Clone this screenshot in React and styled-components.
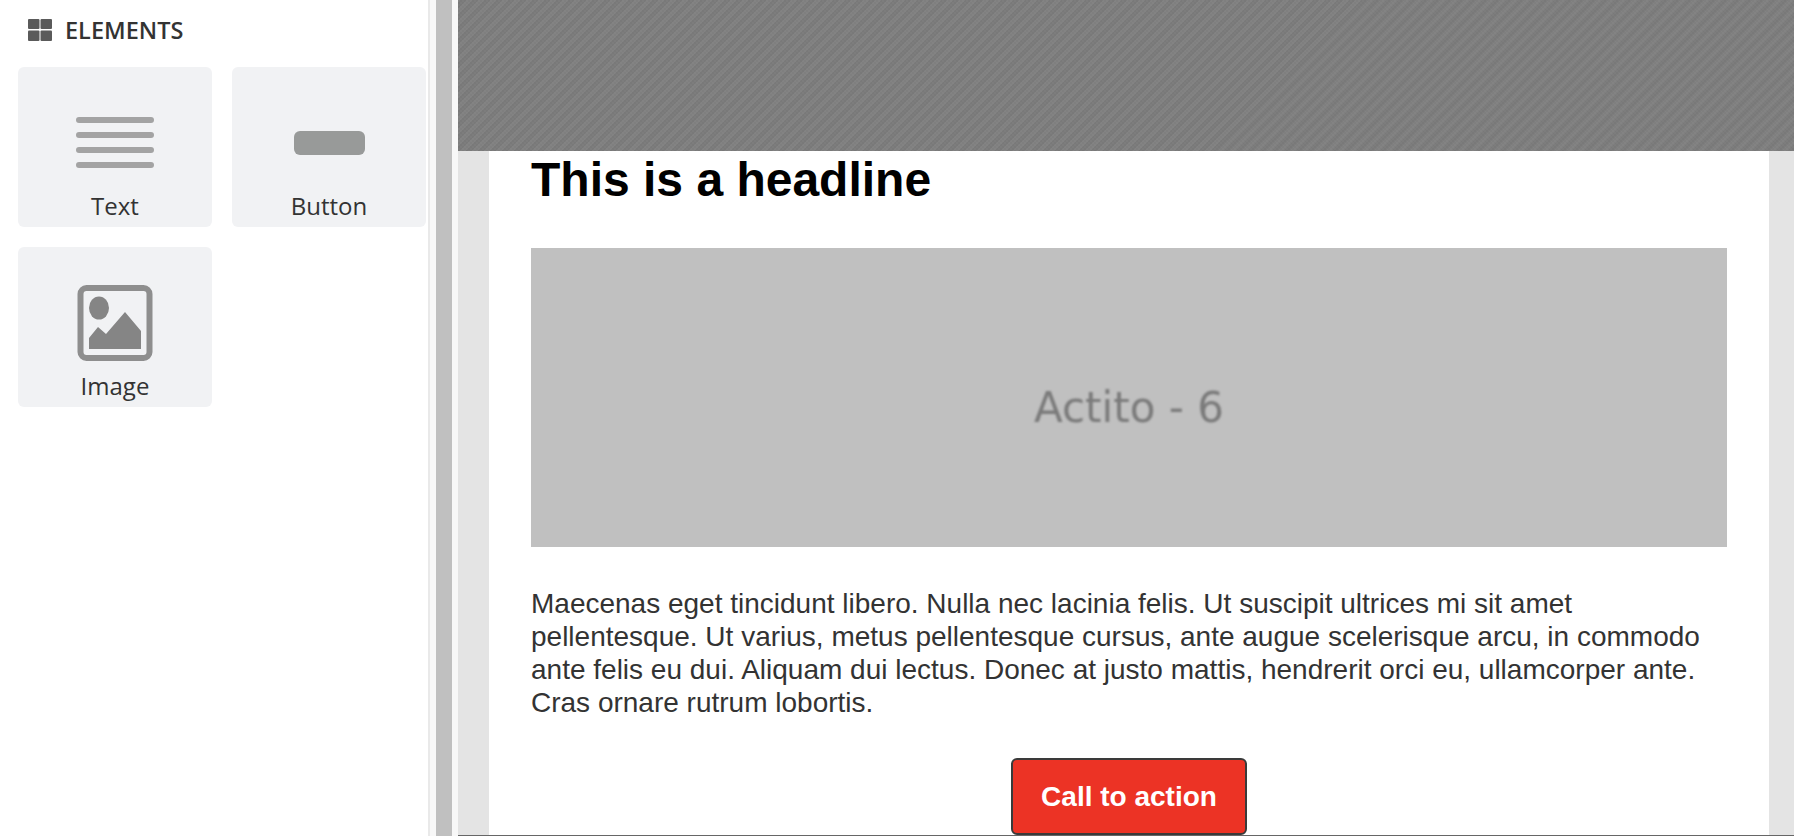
import React from 'react';
import styled, {createGlobalStyle} from 'styled-components';

const GlobalStyle = createGlobalStyle`
  html, body {
    margin: 0;
    padding: 0;
    height: 100%;
    overflow: hidden;
    background: #fff;
  }
`;

const Page = styled.div`
  display: flex;
  width: 1794px;
  height: 836px;
  overflow: hidden;
`;

const Sidebar = styled.aside`
  width: 428px;
  flex-shrink: 0;
  padding: 19px 2px 0 18px;
  box-sizing: border-box;
  font-family: 'Open Sans', sans-serif;
  color: #333;
`;

const SidebarTitle = styled.h3`
  display: flex;
  align-items: center;
  gap: 13px;
  margin: 0 0 26px 10px;
  height: 22px;
  font-size: 23.5px;
  font-weight: 600;
  line-height: 22px;
`;

const ElementGrid = styled.div`
  display: grid;
  grid-template-columns: 194px 194px;
  grid-auto-rows: 160px;
  gap: 20px;
`;

const ElementCard = styled.div`
  display: flex;
  flex-direction: column;
  align-items: center;
  background: #f1f2f4;
  border-radius: 6px;
`;

const CardIcon = styled.div`
  height: 124px;
  display: flex;
  align-items: center;
  justify-content: center;
  flex-shrink: 0;
  padding: 28px 0 0;
  box-sizing: border-box;
`;

const CardLabel = styled.span`
  font-size: 24px;
  line-height: 30px;
`;

const Splitter = styled.div`
  width: 30px;
  flex-shrink: 0;
  box-sizing: border-box;
  border-left: 2px solid #e9e9e9;
  background: #f8f8f8;
  padding: 0 6px;
`;

const SplitterBar = styled.div`
  width: 16px;
  height: 100%;
  background: #c0c0c0;
`;

const Canvas = styled.main`
  flex: 1;
  min-width: 0;
  display: flex;
  flex-direction: column;
  border-bottom: 1px solid #666;
  background: #e4e4e4;
`;

const HatchedBand = styled.div`
  height: 151px;
  flex-shrink: 0;
  background-color: #808080;
  background-image:
    conic-gradient(rgba(0, 0, 0, 0.03) 25%, transparent 0 50%, rgba(0, 0, 0, 0.03) 0 75%, transparent 0),
    repeating-linear-gradient(-45deg, #7d7d7d 0 4.25px, #838383 4.25px 8.5px);
  background-size: 4px 4px, auto;
`;

const EmailSheet = styled.div`
  flex: 1;
  min-height: 0;
  margin: 0 25px 0 31px;
  padding: 0 42px;
  background: #fff;
  font-family: 'Liberation Sans', Arial, sans-serif;
  overflow: hidden;
`;

const Headline = styled.h1`
  margin: 0;
  padding-top: 1px;
  font-size: 48px;
  line-height: 56px;
  font-weight: 700;
  color: #000;
`;

const Placeholder = styled.div`
  display: flex;
  align-items: center;
  justify-content: center;
  height: 299px;
  margin-top: 40px;
  padding-top: 20px;
  box-sizing: border-box;
  background: #c0c0c0;
`;

const PlaceholderText = styled.span`
  font-family: 'DejaVu Sans', sans-serif;
  font-size: 42px;
  color: #7a7a7a;
  filter: blur(0.8px);
`;

const BodyText = styled.p`
  margin: 40px 0 0;
  font-size: 28px;
  line-height: 33px;
  color: #333;
`;

const ButtonRow = styled.div`
  display: flex;
  justify-content: center;
  margin-top: 39px;
`;

const CtaButton = styled.a`
  display: flex;
  align-items: center;
  justify-content: center;
  width: 236px;
  height: 77px;
  padding-top: 1px;
  box-sizing: border-box;
  background: #ec3325;
  border: 2px solid #3a3a3a;
  border-radius: 6px;
  color: #fff;
  font-size: 28px;
  font-weight: 700;
`;

const GridIcon = () => (
  <svg width="24" height="22" viewBox="0 0 24 22" fill="#5a5a5a">
    <rect x="0" y="0" width="11.5" height="10" rx="1" />
    <rect x="12.5" y="0" width="11.5" height="10" rx="1" />
    <rect x="0" y="11.5" width="11.5" height="10.5" rx="1" />
    <rect x="12.5" y="11.5" width="11.5" height="10.5" rx="1" />
  </svg>
);

const TextIcon = () => (
  <svg width="78" height="52" viewBox="0 0 78 52" fill="#a3a3a3">
    <rect x="0" y="0" width="78" height="6" rx="3" />
    <rect x="0" y="15" width="78" height="6" rx="3" />
    <rect x="0" y="30" width="78" height="6" rx="3" />
    <rect x="0" y="45" width="78" height="6" rx="3" />
  </svg>
);

const ButtonIcon = () => (
  <svg width="71" height="24" viewBox="0 0 71 24">
    <rect width="71" height="24" rx="6" fill="#989a99" />
  </svg>
);

const ImageIcon = () => (
  <svg width="76" height="76" viewBox="0 0 76 76">
    <rect x="3.5" y="3" width="69" height="70" rx="6" fill="none" stroke="#8e8e8e" strokeWidth="6" />
    <ellipse cx="22" cy="23" rx="10" ry="11.5" fill="#858585" />
    <path d="M12 64V53L21 42L29 49L48 27L64 46V64Z" fill="#858585" />
  </svg>
);

const elements = [
  {label: 'Text', icon: <TextIcon />},
  {label: 'Button', icon: <ButtonIcon />},
  {label: 'Image', icon: <ImageIcon />},
];

const App = () => {
  return (
    <Page>
      <GlobalStyle />
      <Sidebar>
        <SidebarTitle>
          <GridIcon />
          ELEMENTS
        </SidebarTitle>
        <ElementGrid>
          {elements.map(el => (
            <ElementCard key={el.label}>
              <CardIcon>{el.icon}</CardIcon>
              <CardLabel>{el.label}</CardLabel>
            </ElementCard>
          ))}
        </ElementGrid>
      </Sidebar>
      <Splitter>
        <SplitterBar />
      </Splitter>
      <Canvas>
        <HatchedBand />
        <EmailSheet>
          <Headline>This is a headline</Headline>
          <Placeholder>
            <PlaceholderText>Actito - 6</PlaceholderText>
          </Placeholder>
          <BodyText>
            Maecenas eget tincidunt libero. Nulla nec lacinia felis. Ut suscipit ultrices mi sit amet
            pellentesque. Ut varius, metus pellentesque cursus, ante augue scelerisque arcu, in commodo
            ante felis eu dui. Aliquam dui lectus. Donec at justo mattis, hendrerit orci eu, ullamcorper ante.
            Cras ornare rutrum lobortis.
          </BodyText>
          <ButtonRow>
            <CtaButton>Call to action</CtaButton>
          </ButtonRow>
        </EmailSheet>
      </Canvas>
    </Page>
  );
};

export default App;
